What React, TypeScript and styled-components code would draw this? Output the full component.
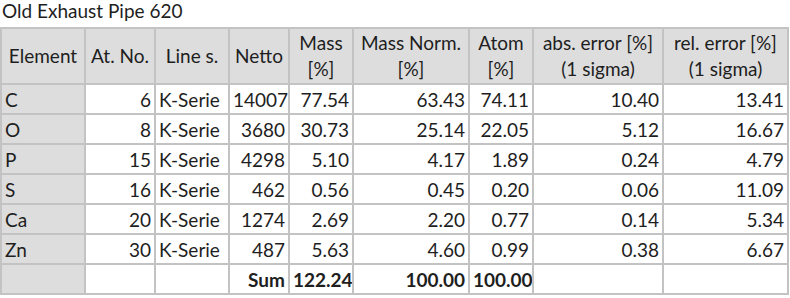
import React from 'react';
import styled, { createGlobalStyle } from 'styled-components';

const GlobalStyle = createGlobalStyle`
  body {
    margin: 0;
    background: #ffffff;
    font-family: Lato, 'Liberation Sans', sans-serif;
    color: #1e1e1e;
  }
`;

const Sheet = styled.div`
  width: 790px;
  height: 298px;
  overflow: hidden;
  background: #ffffff;
`;

const Title = styled.div`
  height: 27px;
  padding-left: 2px;
  font-size: 19px;
  line-height: 22px;
  white-space: nowrap;
`;

const Table = styled.table`
  border-collapse: collapse;
  table-layout: fixed;
  width: 789px;
  font-size: 19px;
`;

const HeadRow = styled.tr`
  height: 56px;
`;

const Row = styled.tr`
  height: 30px;
`;

const HeadCell = styled.th`
  padding: 0 2px;
  border: 2px solid #c3c3c3;
  background: #dddddd;
  font-weight: 400;
  line-height: 26px;
  text-align: center;
  vertical-align: middle;
  white-space: nowrap;
  overflow: hidden;
`;

const Cell = styled.td<{ $align?: 'left' | 'right'; $label?: boolean; $bold?: boolean }>`
  padding: 2px 3px 0;
  border: 2px solid #c3c3c3;
  background: ${({ $label }) => ($label ? '#dddddd' : '#ffffff')};
  text-align: ${({ $align }) => $align || 'right'};
  font-weight: ${({ $bold }) => ($bold ? 700 : 400)};
  line-height: 24px;
  vertical-align: middle;
  white-space: nowrap;
  overflow: hidden;
`;

const widths = [84, 70, 74, 60, 64, 116, 64, 130, 125];

const headers: string[][] = [
  ['Element'],
  ['At. No.'],
  ['Line s.'],
  ['Netto'],
  ['Mass', '[%]'],
  ['Mass Norm.', '[%]'],
  ['Atom', '[%]'],
  ['abs. error [%]', '(1 sigma)'],
  ['rel. error [%]', '(1 sigma)'],
];

const rows = [
  ['C', '6', 'K-Serie', '14007', '77.54', '63.43', '74.11', '10.40', '13.41'],
  ['O', '8', 'K-Serie', '3680', '30.73', '25.14', '22.05', '5.12', '16.67'],
  ['P', '15', 'K-Serie', '4298', '5.10', '4.17', '1.89', '0.24', '4.79'],
  ['S', '16', 'K-Serie', '462', '0.56', '0.45', '0.20', '0.06', '11.09'],
  ['Ca', '20', 'K-Serie', '1274', '2.69', '2.20', '0.77', '0.14', '5.34'],
  ['Zn', '30', 'K-Serie', '487', '5.63', '4.60', '0.99', '0.38', '6.67'],
];

const sumRow = ['', '', '', 'Sum', '122.24', '100.00', '100.00', '', ''];

export default function App() {
  return (
    <Sheet>
      <GlobalStyle />
      <Title>Old Exhaust Pipe 620</Title>
      <Table>
        <colgroup>
          {widths.map((w, i) => (
            <col key={i} style={{ width: w }} />
          ))}
        </colgroup>
        <thead>
          <HeadRow>
            {headers.map((lines, i) => (
              <HeadCell key={i}>
                {lines.map((l, j) => (
                  <div key={j}>{l}</div>
                ))}
              </HeadCell>
            ))}
          </HeadRow>
        </thead>
        <tbody>
          {rows.map((r) => (
            <Row key={r[0]}>
              {r.map((v, i) => (
                <Cell key={i} $label={i === 0} $align={i === 0 || i === 2 ? 'left' : 'right'}>
                  {v}
                </Cell>
              ))}
            </Row>
          ))}
          <Row>
            {sumRow.map((v, i) => (
              <Cell key={i} $label={i === 0} $bold>
                {v}
              </Cell>
            ))}
          </Row>
        </tbody>
      </Table>
    </Sheet>
  );
}
